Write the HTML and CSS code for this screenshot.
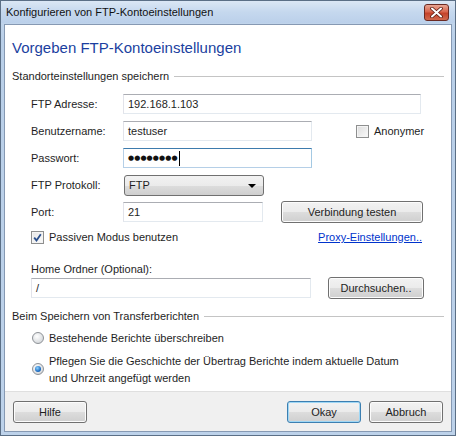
FILE: index.html
```html
<!doctype html>
<html lang="de">

<head>
  <meta charset="UTF-8">
  <title>Konfigurieren von FTP-Kontoeinstellungen</title>
  <link rel="stylesheet" href="styles.css">
</head>

<body>
  <div class="window">
    <div class="titlebar">
      <span class="title">Konfigurieren von FTP-Kontoeinstellungen</span>
      <span class="close">
        <svg width="13" height="11" viewBox="0 0 13 11">
          <path d="M2 1.5 L11 9.5 M11 1.5 L2 9.5" stroke="#5a1a10" stroke-width="3.6" stroke-linecap="round"/>
          <path d="M2 1.5 L11 9.5 M11 1.5 L2 9.5" stroke="#fff" stroke-width="2" stroke-linecap="round"/>
        </svg>
      </span>
    </div>

    <div class="client">
      <div class="content">
        <h1 class="heading">Vorgeben FTP-Kontoeinstellungen</h1>

        <div class="group">Standorteinstellungen speichern</div>

        <div class="form">
          <div class="row">
            <label class="label">FTP Adresse:</label>
            <div class="input wide">192.168.1.103</div>
          </div>
          <div class="row">
            <label class="label">Benutzername:</label>
            <div class="input mid">testuser</div>
            <span class="check anon"><span class="box"></span>Anonymer</span>
          </div>
          <div class="row">
            <label class="label">Passwort:</label>
            <div class="input mid focus"><span class="dots">&#9679;&#9679;&#9679;&#9679;&#9679;&#9679;&#9679;&#9679;</span><span class="caret"></span></div>
          </div>
          <div class="row">
            <label class="label">FTP Protokoll:</label>
            <div class="select">FTP<span class="arrow"></span></div>
          </div>
          <div class="row">
            <label class="label">Port:</label>
            <div class="input short">21</div>
            <button class="btn test">Verbindung testen</button>
          </div>
          <div class="row opts">
            <span class="check"><span class="box checked">
              <svg width="9" height="9" viewBox="0 0 9 9"><path d="M1.2 4.6 L3.5 7.4 L7.8 1.2" fill="none" stroke="#2a4f8c" stroke-width="1.8"/></svg>
            </span>Passiven Modus benutzen</span>
            <a class="link" href="#">Proxy-Einstellungen..</a>
          </div>
        </div>

        <div class="home">
          <div class="home-label">Home Ordner (Optional):</div>
          <div class="home-row">
            <div class="input home-input">/</div>
            <button class="btn browse">Durchsuchen..</button>
          </div>
        </div>

        <div class="group">Beim Speichern von Transferberichten</div>

        <div class="radios">
          <div class="radio-row"><span class="radio"></span><span>Bestehende Berichte überschreiben</span></div>
          <div class="radio-row"><span class="radio on"></span><span>Pflegen Sie die Geschichte der Übertrag Berichte indem aktuelle Datum<br>und Uhrzeit angefügt werden</span></div>
        </div>
      </div>

      <div class="footer">
        <button class="btn">Hilfe</button>
        <div class="footer-right">
          <button class="btn default">Okay</button>
          <button class="btn">Abbruch</button>
        </div>
      </div>
    </div>
  </div>
</body>

</html>
```

FILE: styles.css
```css
* {
  margin: 0;
  padding: 0;
  box-sizing: border-box;
}

body {
  width: 456px;
  height: 436px;
  font-family: "Liberation Sans", Arial, sans-serif;
  font-size: 11px;
  color: #1e1e1e;
  background: #fff;
  overflow: hidden;
}

.window {
  width: 456px;
  height: 436px;
  border: 1px solid #5b6f86;
  background: linear-gradient(#c9daee, #b9cfe8 40px, #bdd2ea);
  display: flex;
  flex-direction: column;
}

.titlebar {
  height: 22px;
  display: flex;
  align-items: center;
  justify-content: space-between;
  padding: 0 6px 0 5px;
  background: linear-gradient(#dbe7f5, #c5d8ee 50%, #bbd0ea);
}

.title {
  color: #111;
  font-size: 11px;
}

.close {
  width: 25px;
  height: 17px;
  margin-top: 1px;
  border: 1px solid #6b2a22;
  border-radius: 3px;
  background: linear-gradient(#e8a593, #d8664e 45%, #c4422a 55%, #d06a4e);
  display: flex;
  align-items: center;
  justify-content: center;
}

.client {
  flex: 1;
  margin: 1px 3px 3px 3px;
  border: 1px solid #8699b3;
  background: #fff;
  display: flex;
  flex-direction: column;
}

.content {
  flex: 1;
  padding: 0 7px 0 7px;
}

.heading {
  font-size: 15px;
  font-weight: normal;
  color: #1b3fa0;
  margin-top: 13px;
  height: 19px;
  line-height: 19px;
}

.group {
  display: flex;
  align-items: center;
  margin-top: 12px;
  height: 14px;
}

.group::after {
  content: "";
  flex: 1;
  border-top: 1px solid #c4c4c4;
  margin-left: 5px;
}

.form {
  padding-left: 19px;
  margin-top: 11px;
  display: flex;
  flex-direction: column;
  gap: 7px;
}

.row {
  display: flex;
  align-items: center;
  height: 20px;
}

.label {
  width: 92px;
  flex: none;
}

.input {
  height: 20px;
  border: 1px solid #abadb3;
  border-color: #abadb3 #e3e9ef #e3e9ef #e2e3ea;
  padding: 0 4px;
  line-height: 18px;
  background: #fff;
}

.wide {
  width: 298px;
}

.mid {
  width: 189px;
}

.short {
  width: 140px;
}

.focus {
  border-color: #3d7bad #a4c9e3 #b5cfe7 #b5cfe7;
  display: flex;
  align-items: center;
}

.dots {
  font-family: "DejaVu Sans", sans-serif;
  font-size: 7px;
  letter-spacing: 0.1px;
  color: #111;
}

.caret {
  width: 1px;
  height: 15px;
  background: #000;
  margin-left: 1px;
}

.check {
  display: flex;
  align-items: center;
}

.anon {
  margin-left: 44px;
}

.box {
  width: 13px;
  height: 13px;
  border: 1px solid #8e8f8f;
  background: linear-gradient(135deg, #dcdcdc, #fafafa);
  box-shadow: inset 0 0 0 1px #f4f4f4;
  margin-right: 5px;
  display: flex;
  align-items: center;
  justify-content: center;
}

.box.checked {
  background: linear-gradient(135deg, #e6e6e6, #fbfbfb);
}

.select {
  width: 140px;
  height: 21px;
  margin-left: 1px;
  border: 1px solid #707070;
  border-radius: 3px;
  background: linear-gradient(#f2f2f2 0%, #ebebeb 50%, #dddddd 51%, #cfcfcf 100%);
  padding: 0 4px;
  line-height: 19px;
  position: relative;
}

.arrow {
  position: absolute;
  right: 7px;
  top: 8px;
  border-left: 4px solid transparent;
  border-right: 4px solid transparent;
  border-top: 4px solid #000;
}

.btn {
  font-family: "Liberation Sans", Arial, sans-serif;
  font-size: 11px;
  color: #1e1e1e;
  width: 74px;
  height: 22px;
  border: 1px solid #707070;
  border-radius: 3px;
  background: linear-gradient(#f2f2f2 0%, #ebebeb 50%, #dddddd 51%, #cfcfcf 100%);
  box-shadow: inset 0 0 0 1px #fcfcfc;
}

.test {
  width: 142px;
  margin-left: 18px;
}

.opts {
  justify-content: space-between;
  padding-right: 22px;
  margin-top: -2px;
}

.link {
  color: #0033cc;
  text-decoration: underline;
}

.home {
  padding-left: 19px;
  margin-top: 16px;
}

.home-label {
  height: 14px;
}

.home-row {
  display: flex;
  align-items: center;
}

.home-input {
  width: 280px;
}

.browse {
  width: 96px;
  margin-left: 17px;
}

.home + .group {
  margin-top: 10px;
}

.radios {
  padding-left: 20px;
  margin-top: 7px;
  display: flex;
  flex-direction: column;
  gap: 6px;
}

.radio-row {
  display: flex;
  align-items: flex-start;
  line-height: 17px;
}

.radio {
  width: 12px;
  height: 12px;
  border-radius: 50%;
  border: 1px solid #8e9297;
  background: radial-gradient(circle at 40% 35%, #ffffff, #d9dcdf 70%, #c6cacf);
  margin: 2px 5px 0 0;
  flex: none;
  display: flex;
  align-items: center;
  justify-content: center;
}

.radio.on {
  margin-top: 10px;
}

.radio.on::after {
  content: "";
  width: 6px;
  height: 6px;
  border-radius: 50%;
  background: radial-gradient(circle at 40% 35%, #8fd3ff, #1f6fc4 60%, #0e4a94);
}

.footer {
  height: 40px;
  background: #f0f0f0;
  border-top: 1px solid #dfdfdf;
  display: flex;
  align-items: center;
  justify-content: space-between;
  padding: 0 8px 0 8px;
}

.footer-right {
  display: flex;
  gap: 8px;
}

.default {
  border-color: #3c7fb1;
  box-shadow: inset 0 0 0 1px #9fd7f5;
}
```
